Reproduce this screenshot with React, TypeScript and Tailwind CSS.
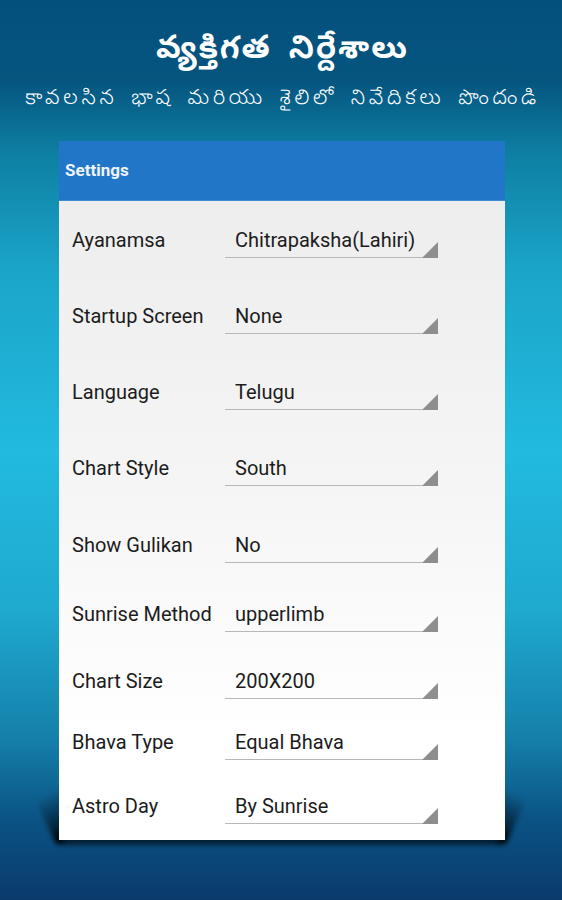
import React from 'react';

const rows = [
  { label: 'Ayanamsa', value: 'Chitrapaksha(Lahiri)', height: 'h-[57px]' },
  { label: 'Startup Screen', value: 'None', height: 'h-[76px]' },
  { label: 'Language', value: 'Telugu', height: 'h-[76px]' },
  { label: 'Chart Style', value: 'South', height: 'h-[76px]' },
  { label: 'Show Gulikan', value: 'No', height: 'h-[77px]' },
  { label: 'Sunrise Method', value: 'upperlimb', height: 'h-[69px]' },
  { label: 'Chart Size', value: '200X200', height: 'h-[67px]' },
  { label: 'Bhava Type', value: 'Equal Bhava', height: 'h-[61px]' },
  { label: 'Astro Day', value: 'By Sunrise', height: 'h-[64px]' },
];

const SettingRow: React.FC<{ label: string; value: string; height: string }> = ({ label, value, height }) => (
  <div className={`flex items-end pl-[13px] text-[20px] leading-[24px] text-[#1c1c1c] ${height}`}>
    <div className="w-[153px] pb-[6px]">{label}</div>
    <div className="relative h-[30px] w-[213px] border-b border-[#b8b8b8] pb-[5px] pl-[10px]">
      {value}
      <svg className="absolute right-0 -bottom-px" width="16" height="16" viewBox="0 0 16 16">
        <polygon points="16,0 16,16 0,16" fill="#8e8e8e" />
      </svg>
    </div>
  </div>
);

const CardShadow = () => (
  <svg className="absolute inset-0" width="562" height="900" viewBox="0 0 562 900">
    <defs>
      <filter id="soft" x="-50%" y="-50%" width="200%" height="200%">
        <feGaussianBlur stdDeviation="2.5" />
      </filter>
      <linearGradient id="wedgeL" x1="60" y1="842" x2="36" y2="800" gradientUnits="userSpaceOnUse">
        <stop offset="0" stopColor="#000" stopOpacity="1" />
        <stop offset="0.35" stopColor="#000" stopOpacity="0.5" />
        <stop offset="1" stopColor="#000" stopOpacity="0" />
      </linearGradient>
      <linearGradient id="wedgeR" x1="502" y1="842" x2="526" y2="800" gradientUnits="userSpaceOnUse">
        <stop offset="0" stopColor="#000" stopOpacity="1" />
        <stop offset="0.35" stopColor="#000" stopOpacity="0.5" />
        <stop offset="1" stopColor="#000" stopOpacity="0" />
      </linearGradient>
    </defs>
    <polygon points="64,770 64,844 56,844 32,792" fill="url(#wedgeL)" filter="url(#soft)" />
    <polygon points="498,770 498,844 506,844 530,792" fill="url(#wedgeR)" filter="url(#soft)" />
    <rect x="62" y="834" width="438" height="11" fill="#000" fillOpacity="0.6" filter="url(#soft)" />
  </svg>
);

export default function App() {
  return (
    <div className="relative h-[900px] w-[562px] overflow-hidden bg-[linear-gradient(to_bottom,#04507c_0%,#05557f_9%,#0e7fa3_17%,#1aa5c8_30%,#22badf_50%,#1fa9cf_68%,#1580aa_82%,#0a5384_91%,#0a3a6c_100%)] font-['Roboto',sans-serif]">
      <CardShadow />
      <div className="relative flex h-[141px] flex-col items-center text-white font-['Noto_Sans_Telugu','Noto_Sans','DejaVu_Sans',sans-serif]">
        <h1 className="mt-[31px] ml-[3px] text-[32px] font-bold leading-[42px] tracking-[2px] [word-spacing:6px]">వ్యక్తిగత నిర్దేశాలు</h1>
        <p className="mt-[13px] ml-[3px] text-[21px] font-light leading-[28px] tracking-[3.8px] whitespace-nowrap [word-spacing:4px]">కావలసిన భాష మరియు శైలిలో నివేదికలు పొందండి</p>
      </div>

      <div className="relative ml-[59px] h-[699px] w-[446px] bg-[linear-gradient(to_bottom,#ececec_0%,#f4f4f4_45%,#ffffff_85%)]">
        <div className="flex h-[60px] items-center border-b border-[#3f8ad2] bg-[#2276c8] pl-[6px] pt-[1px] text-[17px] font-bold text-[#eef4fb]">
          Settings
        </div>
        {rows.map((row) => (
          <SettingRow key={row.label} {...row} />
        ))}
      </div>
    </div>
  );
}
